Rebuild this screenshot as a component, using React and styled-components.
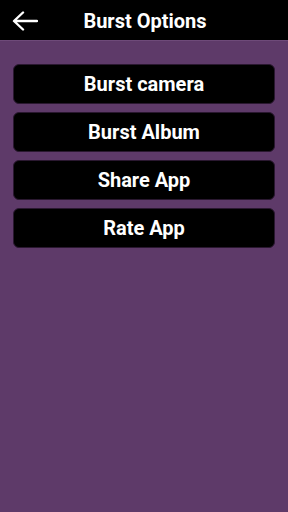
import styled, { createGlobalStyle } from 'styled-components'

const Global = createGlobalStyle`
    html, body {
        margin: 0;
        padding: 0;
        background: #5e3a69;
    }
    * {
        box-sizing: border-box;
    }
`

const Screen = styled.div`
    width: 288px;
    height: 512px;
    background: #5e3a69;
    font-family: Roboto, 'Liberation Sans', sans-serif;
    display: flex;
    flex-direction: column;
`

const Toolbar = styled.div`
    height: 41px;
    background: #000;
    border-bottom: 1px solid #6e4a79;
    display: flex;
    align-items: center;
    position: relative;
`

const BackButton = styled.button`
    width: 40px;
    height: 40px;
    padding: 1px 0 0 12px;
    border: none;
    background: none;
    display: flex;
    align-items: center;
    cursor: pointer;
`

const Title = styled.h1`
    position: absolute;
    left: 0;
    right: 0;
    top: 10px;
    margin: 0;
    line-height: 22px;
    text-align: center;
    color: #fff;
    font-size: 20px;
    font-weight: 700;
    padding-left: 2px;
    pointer-events: none;
`

const Menu = styled.div`
    display: flex;
    flex-direction: column;
    gap: 8px;
    padding: 23px 13px 0;
`

const OptionButton = styled.button`
    height: 40px;
    width: 100%;
    background: #000;
    border: 1px solid #2a1830;
    border-radius: 6px;
    color: #fff;
    font-family: Roboto, 'Liberation Sans', sans-serif;
    font-size: 20px;
    font-weight: 700;
    cursor: pointer;
`

const options = ['Burst camera', 'Burst Album', 'Share App', 'Rate App']

const App = () => {
    return (
        <>
            <Global />
            <Screen>
                <Toolbar>
                    <BackButton aria-label="back">
                        <svg width="26" height="20" viewBox="0 0 26 20">
                            <path
                                d="M25 10H3M11 1.5L2 10l9 8.5"
                                stroke="#fff"
                                strokeWidth="2.4"
                                fill="none"
                                strokeLinecap="round"
                                strokeLinejoin="round"
                            />
                        </svg>
                    </BackButton>
                    <Title>Burst Options</Title>
                </Toolbar>
                <Menu>
                    {options.map((label) => (
                        <OptionButton key={label}>{label}</OptionButton>
                    ))}
                </Menu>
            </Screen>
        </>
    )
}

export default App
